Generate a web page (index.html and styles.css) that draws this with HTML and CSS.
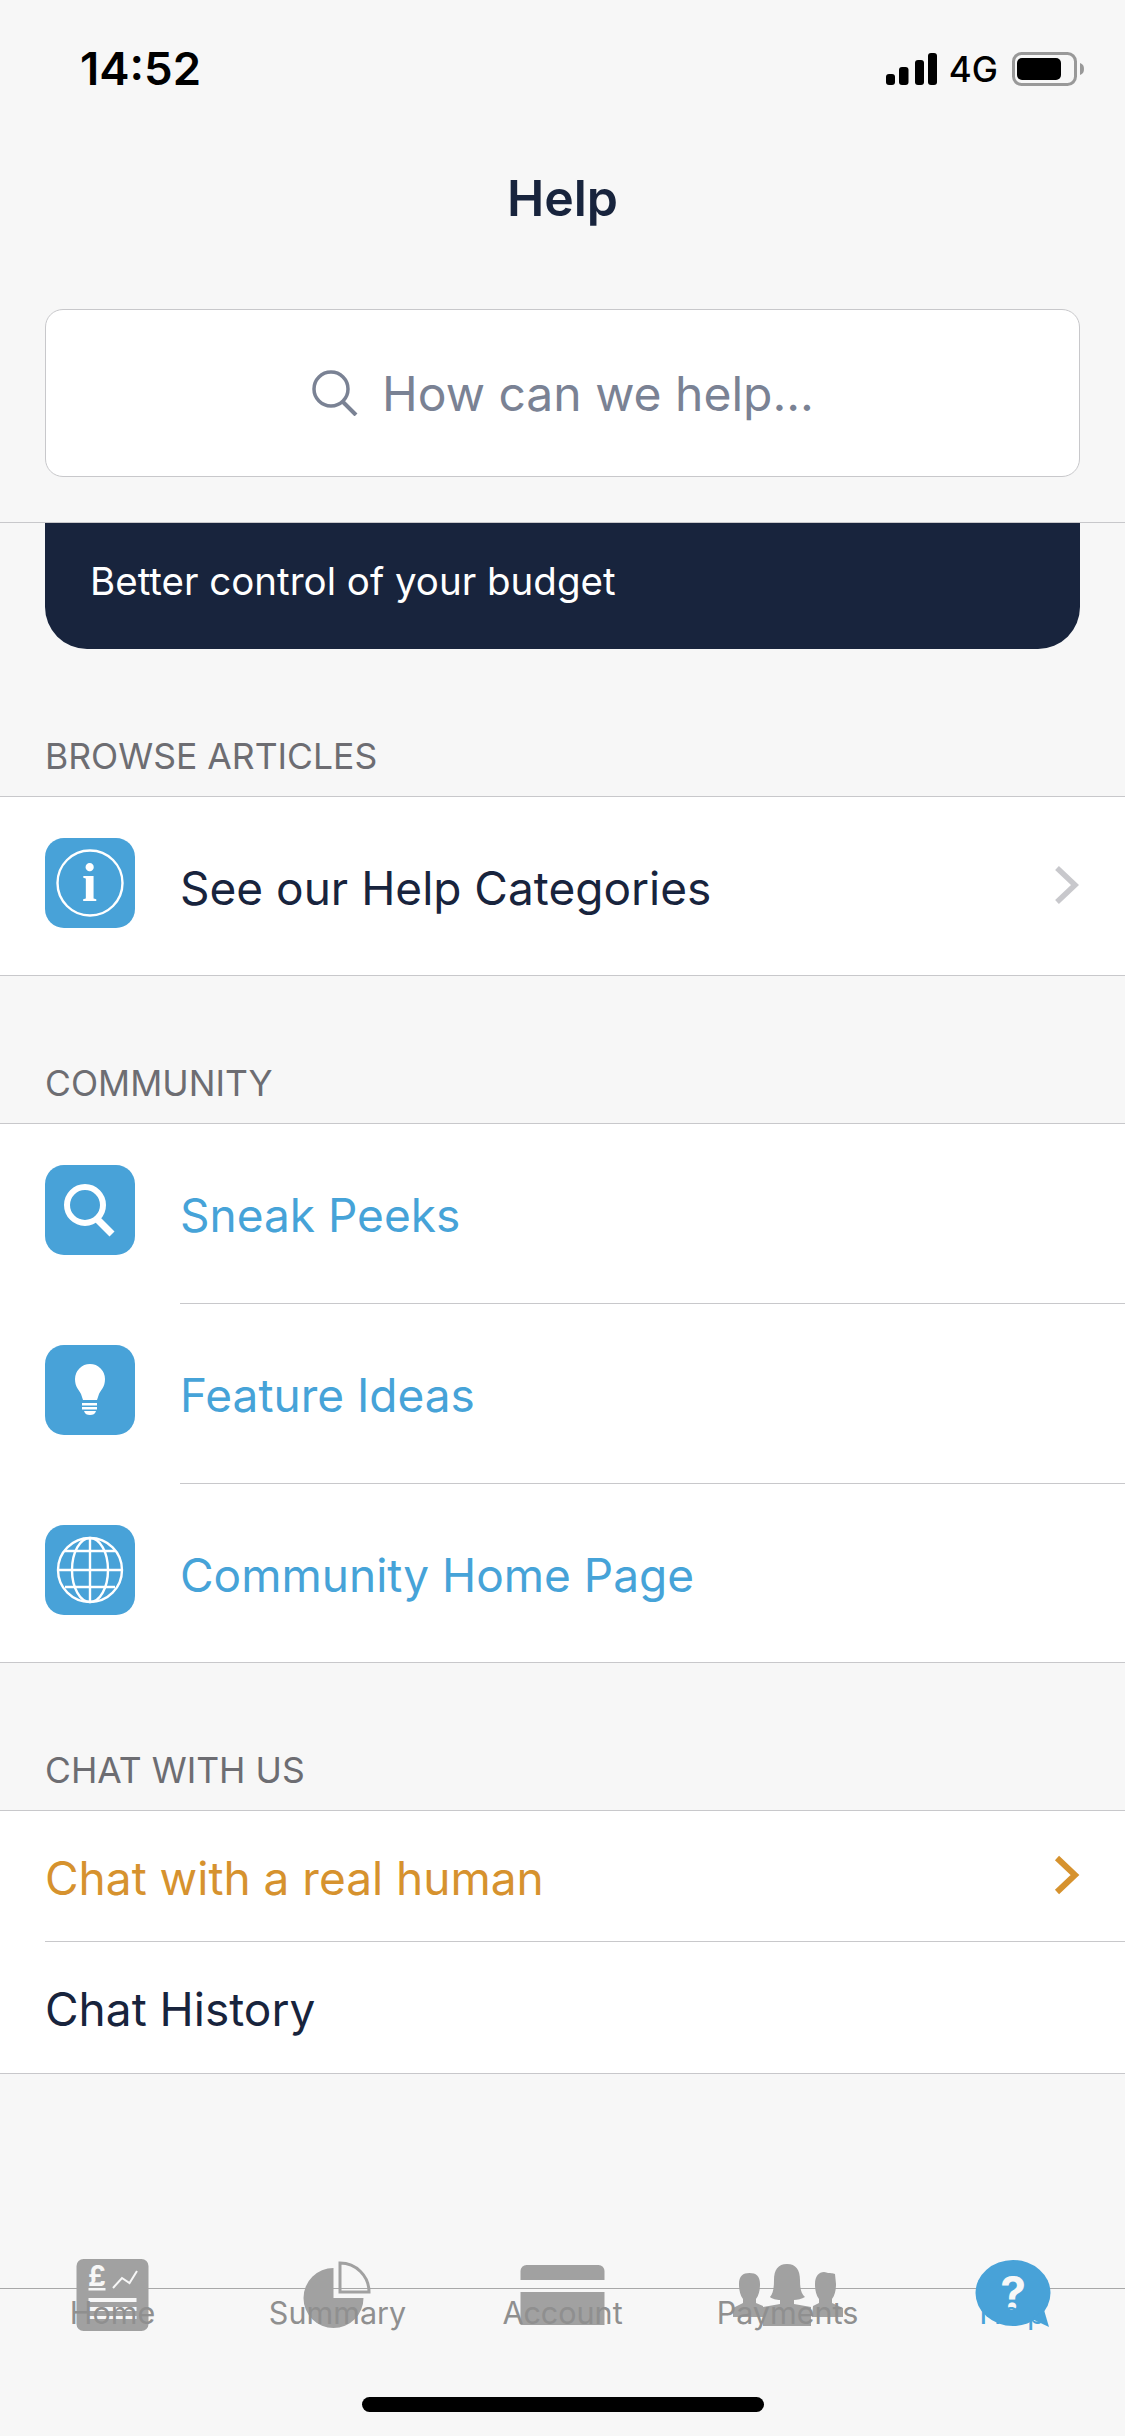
FILE: index.html
```html
<!DOCTYPE html>
<html lang="en">
<head>
    <meta charset="UTF-8">
    <meta name="viewport" content="width=device-width, initial-scale=1.0">
    <title>Help</title>
    <link rel="stylesheet" href="styles.css">
</head>
<body>
    <header class="top">
        <div class="status">
            <span class="time">14:52</span>
            <div class="status-right">
                <svg class="signal" width="52" height="32" viewBox="0 0 52 32">
                    <rect x="0" y="21" width="9" height="11" rx="3"/>
                    <rect x="13" y="14" width="9.500" height="18" rx="3"/>
                    <rect x="29" y="7" width="9" height="25" rx="3"/>
                    <rect x="42" y="0" width="9" height="32" rx="3"/>
                </svg>
                <span class="network">4G</span>
                <svg class="battery" width="72" height="34" viewBox="0 0 72 34">
                    <rect x="1.500" y="1.500" width="62" height="31" rx="8" fill="none" stroke="#999" stroke-width="3"/>
                    <rect x="5" y="6" width="44" height="22" rx="5"/>
                    <path d="M68 11c3 1 4 3 4 6s-1 5-4 6z" fill="#999"/>
                </svg>
            </div>
        </div>
        <h1 class="title">Help</h1>
        <div class="search">
            <svg width="48" height="46" viewBox="0 0 48 46">
                <circle cx="20" cy="19" r="17" fill="none" stroke="#7a8294" stroke-width="3.500"/>
                <path d="M32 32l13 13" fill="none" stroke="#7a8294" stroke-width="4"/>
            </svg>
            <span class="search-text">How can we help...</span>
        </div>
    </header>

    <main class="content">
        <div class="banner">Better control of your budget</div>

        <p class="section-label">BROWSE ARTICLES</p>
        <div class="group">
            <div class="row">
                <svg class="row-icon" viewBox="0 0 90 90">
                    <rect width="90" height="90" rx="19" fill="#48a2d8"/>
                    <circle cx="45" cy="45" r="32.500" fill="none" stroke="#fff" stroke-width="2.400"/>
                    <text x="44.500" y="63" class="info-i">i</text>
                </svg>
                <div class="row-body">
                    <span class="row-text">See our Help Categories</span>
                    <svg class="chevron" width="26" height="40" viewBox="0 0 26 40">
                        <path d="M3 3l18 17-18 17" fill="none" stroke="#c8c8cc" stroke-width="5.500"/>
                    </svg>
                </div>
            </div>
        </div>

        <p class="section-label">COMMUNITY</p>
        <div class="group">
            <div class="row">
                <svg class="row-icon" viewBox="0 0 90 90">
                    <rect width="90" height="90" rx="19" fill="#48a2d8"/>
                    <circle cx="40" cy="40" r="18" fill="none" stroke="#fff" stroke-width="6"/>
                    <path d="M53 55l14 14" fill="none" stroke="#fff" stroke-width="7"/>
                </svg>
                <div class="row-body ruled">
                    <span class="row-text link">Sneak Peeks</span>
                </div>
            </div>
            <div class="row">
                <svg class="row-icon" viewBox="0 0 90 90">
                    <rect width="90" height="90" rx="19" fill="#48a2d8"/>
                    <path d="M45 19a15 15 0 0 1 15 15c0 8-4 11-6 15l-2 6h-14l-2-6c-2-4-6-7-6-15a15 15 0 0 1 15-15z" fill="#fff"/>
                    <rect x="37" y="58" width="15" height="2.500" fill="#fff"/>
                    <rect x="37" y="62" width="15" height="2.500" fill="#fff"/>
                    <path d="M39 66h12c-1 3-3 4-6 4s-5-1-6-4z" fill="#fff"/>
                </svg>
                <div class="row-body ruled">
                    <span class="row-text link">Feature Ideas</span>
                </div>
            </div>
            <div class="row">
                <svg class="row-icon" viewBox="0 0 90 90">
                    <rect width="90" height="90" rx="19" fill="#48a2d8"/>
                    <g fill="none" stroke="#fff" stroke-width="2.400">
                        <circle cx="45" cy="45" r="32"/>
                        <ellipse cx="45" cy="45" rx="18" ry="32"/>
                        <path d="M45 13v64M13 45h64M20 26h50M20 62h50"/>
                    </g>
                </svg>
                <div class="row-body">
                    <span class="row-text link">Community Home Page</span>
                </div>
            </div>
        </div>

        <p class="section-label">CHAT WITH US</p>
        <div class="group">
            <div class="row short">
                <div class="row-body ruled">
                    <span class="row-text accent">Chat with a real human</span>
                    <svg class="chevron" width="26" height="40" viewBox="0 0 26 40">
                        <path d="M3 3l18 17-18 17" fill="none" stroke="#d6922e" stroke-width="6"/>
                    </svg>
                </div>
            </div>
            <div class="row short">
                <div class="row-body">
                    <span class="row-text">Chat History</span>
                </div>
            </div>
        </div>
    </main>

    <nav class="tabbar">
        <div class="tab">
            <svg class="tab-icon" viewBox="0 0 110 72">
                <rect x="18.500" width="72" height="72" rx="7" fill="#a1a1a1"/>
                <text x="39" y="27" class="pound">£</text>
                <rect x="30.500" y="29" width="17" height="2.500" fill="#f7f7f7"/>
                <path d="M55 29l9-10 7.500 5 7.500-12" fill="none" stroke="#f7f7f7" stroke-width="2"/>
                <rect x="30.500" y="39" width="48" height="4" fill="#f7f7f7"/>
                <rect x="30.500" y="48" width="48" height="4" fill="#f7f7f7"/>
                <rect x="30.500" y="57" width="48" height="3" fill="#f7f7f7"/>
            </svg>
            <span class="tab-label">Home</span>
        </div>
        <div class="tab">
            <svg class="tab-icon" viewBox="0 0 110 72">
                <path d="M50.500 39V9A30 30 0 1 0 80.500 39z" fill="#a1a1a1"/>
                <path d="M57 33V4A29 29 0 0 1 86 33z" fill="none" stroke="#a1a1a1" stroke-width="3"/>
            </svg>
            <span class="tab-label">Summary</span>
        </div>
        <div class="tab">
            <svg class="tab-icon" viewBox="0 0 110 72">
                <path d="M12.500 21v-9a6 6 0 0 1 6-6h72a6 6 0 0 1 6 6v9z" fill="#a1a1a1"/>
                <path d="M12.500 33h84v33h-84z" fill="#a1a1a1"/>
            </svg>
            <span class="tab-label">Account</span>
        </div>
        <div class="tab">
            <svg class="tab-icon" viewBox="0 0 110 72">
                <g fill="#a1a1a1">
                    <path d="M6 25c0-8 4-11 10.500-11S27 17 27 25c0 6-1 11-4 15v4l7 3v11H0V49l10-5v-4c-3-4-4-9-4-15z"/>
                    <path d="M54 5c9 0 13 6 13 16 0 8 1 14 5 17-3 2-8 3-11 3v4l17 3v19H30V48l17-3v-4c-3 0-8-1-10-3 3-3 4-9 4-17 0-10 4-16 13-16z"/>
                    <path d="M82 25c0-8 4-12 9-12 2 0 3 1 4 1s5 0 7 1l1 10c0 6-1 11-4 15v4l11 5v9H79l1-11 6-3v-4c-3-4-4-9-4-15z"/>
                </g>
            </svg>
            <span class="tab-label">Payments</span>
        </div>
        <div class="tab">
            <svg class="tab-icon" viewBox="0 0 110 72">
                <ellipse cx="55" cy="34" rx="37.500" ry="33" fill="#48a2d8"/>
                <path d="M74 60l17 8-5-17z" fill="#48a2d8"/>
                <text x="55" y="51" class="question">?</text>
            </svg>
            <span class="tab-label active">Help</span>
        </div>
        <div class="home-bar"></div>
    </nav>
</body>
</html>
```

FILE: styles.css
```css
body
{
    margin: 0;
    width: 1125px;
    height: 2436px;
    overflow: hidden;
    display: flex;
    flex-direction: column;
    background-color: #f7f7f7;
    color: #18243d;
    font-family: Inter, "Liberation Sans", sans-serif;
}
.top
{
    height: 522px;
    border-bottom: 1px solid #c8c8cb;
}
.status
{
    height: 138px;
    padding: 45px 41px 0 80px;
    box-sizing: border-box;
    display: flex;
    justify-content: space-between;
    align-items: flex-start;
    color: #000;
}
.time
{
    font-size: 45.500px;
    font-weight: 600;
    line-height: 48px;
}
.status-right
{
    display: flex;
    align-items: center;
    gap: 14px;
    margin-top: 7px;
}
.signal
{
    margin-right: -3px;
}
.network
{
    font-size: 35px;
    font-weight: 500;
    line-height: 34px;
}
.title
{
    margin: 0;
    height: 121px;
    font-size: 50px;
    font-weight: 600;
    line-height: 120px;
    text-align: center;
}
.search
{
    margin: 50px 45px 0;
    height: 168px;
    box-sizing: border-box;
    display: flex;
    justify-content: center;
    align-items: center;
    gap: 23px;
    background-color: #fff;
    border: 1.500px solid #c8c8cb;
    border-radius: 18px;
}
.search-text
{
    font-size: 48px;
    color: #7a8294;
}
.content
{
    flex: 1;
}
.banner
{
    margin: 0 45px 1px;
    height: 126px;
    box-sizing: border-box;
    padding: 35px 0 0 45px;
    background-color: #18243d;
    color: #fff;
    font-size: 38.500px;
    line-height: 46px;
    border-radius: 0 0 42px 42px;
}
.section-label
{
    margin: 88px 0 19px 45px;
    height: 40px;
    font-size: 35.500px;
    line-height: 40px;
    color: #6d6d72;
}
.group
{
    background-color: #fff;
    border-top: 1px solid #c8c8cb;
    border-bottom: 1px solid #c8c8cb;
}
.row
{
    height: 180px;
    display: flex;
    align-items: center;
    padding-left: 45px;
}
.row:last-child
{
    height: 178px;
}
.row.short
{
    height: 131px;
}
.row-icon
{
    flex: none;
    align-self: flex-start;
    width: 90px;
    height: 90px;
    margin: 41px 45px 0 0;
}
.row-body
{
    flex: 1;
    height: 100%;
    padding-right: 45px;
    display: flex;
    align-items: center;
    justify-content: space-between;
}
.row-body.ruled
{
    box-sizing: border-box;
    border-bottom: 1px solid #c8c8cb;
}
.row-text
{
    padding-top: 3px;
    font-size: 46px;
}
.chevron
{
    margin-bottom: 3px;
}
.link
{
    color: #46a3d8;
}
.accent
{
    color: #d6922e;
}
.info-i
{
    font-family: "Liberation Serif", serif;
    font-weight: bold;
    font-size: 54px;
    fill: #fff;
    text-anchor: middle;
}
.tabbar
{
    position: relative;
    height: 148px;
    box-sizing: border-box;
    border-top: 1px solid #a8a8a8;
    display: flex;
}
.tab
{
    flex: 1;
    margin-top: -30px;
    display: flex;
    flex-direction: column;
    align-items: center;
}
.tab-icon
{
    display: block;
    width: 110px;
    height: 72px;
}
.tab-label
{
    margin-top: -36px;
    font-size: 30.500px;
    line-height: 36px;
    color: #8f8f8f;
}
.tab-label.active
{
    color: #48a2d8;
}
.pound
{
    font-family: Inter, sans-serif;
    font-weight: 700;
    font-size: 28px;
    fill: #f7f7f7;
    text-anchor: middle;
}
.question
{
    font-family: Inter, sans-serif;
    font-weight: 700;
    font-size: 46px;
    fill: #f7f7f7;
    text-anchor: middle;
}
.home-bar
{
    position: absolute;
    left: 362px;
    bottom: 24px;
    width: 402px;
    height: 15px;
    border-radius: 8px;
    background-color: #000;
}
```
